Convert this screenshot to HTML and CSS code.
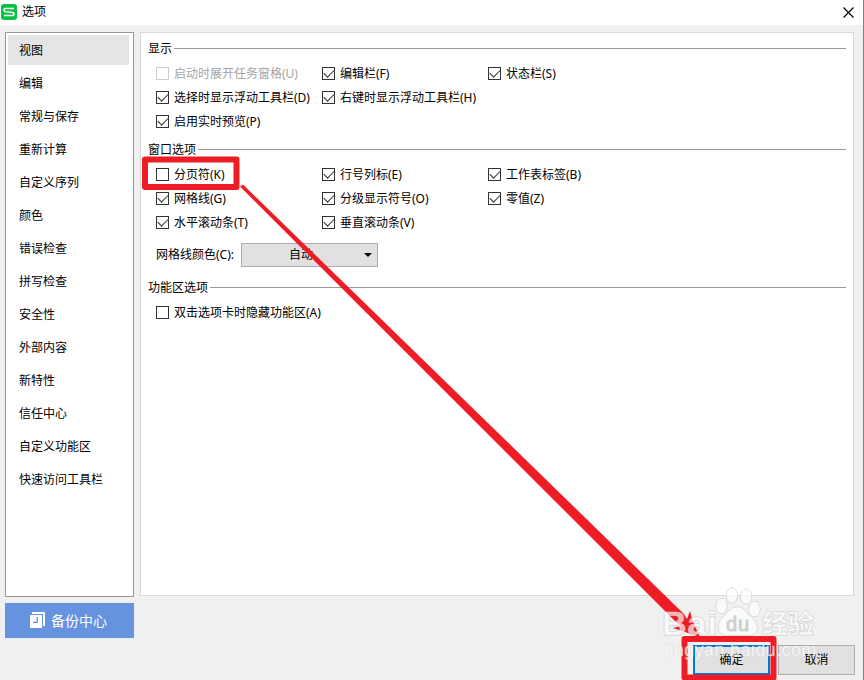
FILE: index.html
```
<!DOCTYPE html>
<html lang="zh-CN">
<head>
  <meta charset="UTF-8" />
  <title>选项</title>
  <link rel="stylesheet" href="styles.css">
</head>
<body>

  <div class="dialog">
    <header class="titlebar">
      <svg class="logo" width="16" height="16" viewBox="0 0 16 16">
        <rect width="16" height="16" rx="3" fill="#0bc144" />
        <path d="M13 4.5H4.2Q3 4.5 3 5.7V6.4Q3 7.4 4.2 7.6L11.8 8.5Q13 8.7 13 9.7V10.3Q13 11.5 11.8 11.5H3" fill="none" stroke="#fff" stroke-width="1.4" />
      </svg>
      <span class="title">选项</span>
      <svg class="close" width="11" height="11" viewBox="0 0 11 11">
        <path d="M.5 .5L10.5 10.5M10.5 .5L.5 10.5" stroke="#000" stroke-width="1.2" />
      </svg>
    </header>

    <main class="content">
      <aside class="sidebar">
        <ul class="nav">
          <li class="active">视图</li>
          <li>编辑</li>
          <li>常规与保存</li>
          <li>重新计算</li>
          <li>自定义序列</li>
          <li>颜色</li>
          <li>错误检查</li>
          <li>拼写检查</li>
          <li>安全性</li>
          <li>外部内容</li>
          <li>新特性</li>
          <li>信任中心</li>
          <li>自定义功能区</li>
          <li>快速访问工具栏</li>
        </ul>
        <button class="backup">
          <svg width="15" height="16" viewBox="0 0 15 16">
            <path d="M2 0H15V14H13V2H2Z" fill="#fff" />
            <path d="M0 3H12V16H0Z" fill="#fff" />
            <path d="M7.3 5V10.4H3" fill="none" stroke="#6593e0" stroke-width="1.3" />
          </svg>
          备份中心
        </button>
      </aside>

      <section class="panel">
        <h2 class="group-title"><span>显示</span></h2>
        <div class="options">
          <label class="option disabled"><i class="box"></i><span>启动时展开任务窗格(U)</span></label>
          <label class="option"><i class="box checked"></i><span>编辑栏(F)</span></label>
          <label class="option"><i class="box checked"></i><span>状态栏(S)</span></label>
          <label class="option"><i class="box checked"></i><span>选择时显示浮动工具栏(D)</span></label>
          <label class="option wide"><i class="box checked"></i><span>右键时显示浮动工具栏(H)</span></label>
          <label class="option"><i class="box checked"></i><span>启用实时预览(P)</span></label>
        </div>

        <h2 class="group-title second"><span>窗口选项</span></h2>
        <div class="options">
          <label class="option"><i class="box"></i><span>分页符(K)</span></label>
          <label class="option"><i class="box checked"></i><span>行号列标(E)</span></label>
          <label class="option"><i class="box checked"></i><span>工作表标签(B)</span></label>
          <label class="option"><i class="box checked"></i><span>网格线(G)</span></label>
          <label class="option"><i class="box checked"></i><span>分级显示符号(O)</span></label>
          <label class="option"><i class="box checked"></i><span>零值(Z)</span></label>
          <label class="option"><i class="box checked"></i><span>水平滚动条(T)</span></label>
          <label class="option"><i class="box checked"></i><span>垂直滚动条(V)</span></label>
        </div>
        <div class="color-row">
          <span class="color-label">网格线颜色(C):</span>
          <div class="dropdown"><span>自动</span><i class="caret"></i></div>
        </div>

        <h2 class="group-title third"><span>功能区选项</span></h2>
        <div class="options">
          <label class="option wide"><i class="box"></i><span>双击选项卡时隐藏功能区(A)</span></label>
        </div>
      </section>
    </main>

    <footer class="actions">
      <button class="btn primary">确定</button>
      <button class="btn">取消</button>
    </footer>
  </div>

  <!-- red marks and watermark drawn over the dialog -->
  <svg class="overlay" width="864" height="680" viewBox="0 0 864 680">
    <g fill="none" stroke="#ee1c25" stroke-linejoin="round">
      <rect x="145" y="159.500" width="91.500" height="27.500" stroke-width="6" />
      <rect x="684.500" y="639" width="89" height="38.500" stroke-width="6" />
    </g>
    <path d="M240 186.500L243 184.500L684 614L687 619L690 611L693 622L700 637L673 628L681 626L676 622Z" fill="#ee1c25" />
    <g class="mark">
      <text x="662" y="635" font-size="34" font-weight="bold" textLength="55">Bai</text>
      <ellipse cx="721.500" cy="606" rx="5.500" ry="7.500" />
      <ellipse cx="732" cy="595.500" rx="5.500" ry="7.500" />
      <ellipse cx="746" cy="596.500" rx="5.500" ry="7.500" />
      <ellipse cx="754.500" cy="609" rx="5.500" ry="7.500" />
      <path d="M737 607C744 607 746 613 752 618C761 626 757 636 747 635.500C740 635 735 635 729 635.500C718 636 715 626 722 618C728 613 730 607 737 607Z" />
      <text class="du" x="726" y="631" font-size="20" textLength="23">du</text>
      <text x="762" y="633" font-size="26" font-weight="bold" textLength="52">经验</text>
      <text class="site" x="665" y="656" font-size="17.500" textLength="151">jingyan.baidu.com</text>
    </g>
  </svg>

</body>
</html>
```
FILE: styles.css
```
* {
  box-sizing: border-box;
}

body {
  margin: 0;
  font-family: "Noto Sans", "Noto Sans CJK SC", sans-serif;
  font-size: 12px;
  line-height: 16px;
  color: #000;
  background: #f0f0f0;
}

.dialog {
  width: 864px;
  height: 680px;
  overflow: hidden;
  border-right: 1px solid #28a5b5;
}

.titlebar {
  display: flex;
  align-items: center;
  height: 25px;
  padding: 0 9px 1px 1px;
  background: #fff;
}

.title {
  margin-left: 5px;
}

.close {
  margin-left: auto;
}

.content {
  display: flex;
  gap: 6px;
  padding: 7px 9px 0 5px;
}

.sidebar {
  width: 129px;
}

.nav {
  height: 565px;
  margin: 0;
  padding: 2px 4px 0 2px;
  list-style: none;
  background: #fff;
  border: 1px solid #999;
}

.nav li {
  height: 30px;
  margin-bottom: 3px;
  padding-left: 11px;
  line-height: 32px;
}

.nav .active {
  background: #e5e5e5;
}

.backup {
  display: flex;
  align-items: center;
  justify-content: center;
  gap: 6px;
  width: 129px;
  height: 35px;
  margin-top: 6px;
  padding: 0 2px 2px 0;
  font: 14px "Noto Sans CJK SC", sans-serif;
  color: #fff;
  background: #6593e0;
  border: none;
}

.panel {
  width: 714px;
  height: 564px;
  padding: 7px 7px 0;
  background: #fff;
  border: 1px solid #d9d9d9;
}

.group-title {
  display: flex;
  align-items: center;
  gap: 2px;
  height: 16px;
  margin: 0;
  font-size: 12px;
  font-weight: normal;
}

.group-title span,
.option span {
  padding-top: 2px;
}

.group-title::after {
  content: "";
  flex: 1;
  height: 1px;
  background: #999;
}

.second {
  margin-top: 8px;
}

.third {
  margin-top: 12px;
}

.options {
  display: grid;
  grid-template-columns: 166px 166px 166px;
  grid-auto-rows: 24px;
  padding: 5px 0 0 8px;
}

.option {
  display: flex;
  align-items: center;
  gap: 5px;
  white-space: nowrap;
}

.wide {
  grid-column: span 2;
}

.disabled {
  color: #a5a5a5;
}

.box {
  position: relative;
  width: 13px;
  height: 13px;
  background: #fff;
  border: 1px solid #333;
}

.disabled .box {
  border-color: #ccc;
}

.checked::after {
  content: "";
  position: absolute;
  left: 1px;
  top: 1px;
  width: 9px;
  height: 5px;
  border-left: 1.500px solid #333;
  border-bottom: 1.500px solid #333;
  transform: rotate(-45deg);
}

.color-row {
  display: flex;
  align-items: center;
  margin-top: 9px;
  padding-left: 8px;
}

.color-label {
  width: 85px;
  white-space: nowrap;
}

.dropdown {
  display: flex;
  align-items: center;
  width: 137px;
  height: 24px;
  padding: 0 5px 0 47px;
  background: #e1e1e1;
  border: 1px solid #adadad;
}

.caret {
  margin-left: auto;
  border: 4px solid transparent;
  border-top-color: #000;
  border-bottom: none;
}

.actions {
  display: flex;
  justify-content: flex-end;
  gap: 8px;
  padding: 7px 8px 0 0;
}

.btn {
  width: 77px;
  height: 30px;
  padding: 0;
  font: inherit;
  color: #000;
  background: #e1e1e1;
  border: 1px solid #adadad;
}

.primary {
  border: 2px solid #0078d7;
}

.overlay {
  position: absolute;
  left: 0;
  top: 0;
  pointer-events: none;
}

.mark {
  font-family: "Liberation Sans", "Noto Sans CJK SC", sans-serif;
  fill: rgba(255, 255, 255, 0.68);
  stroke: rgba(180, 180, 180, 0.6);
  stroke-width: 1px;
  paint-order: stroke;
}

.du {
  fill: #d0d0d0;
  stroke: #d0d0d0;
}

.site {
  fill: rgba(255, 255, 255, 0.75);
  stroke: rgba(190, 190, 190, 0.3);
}
```
